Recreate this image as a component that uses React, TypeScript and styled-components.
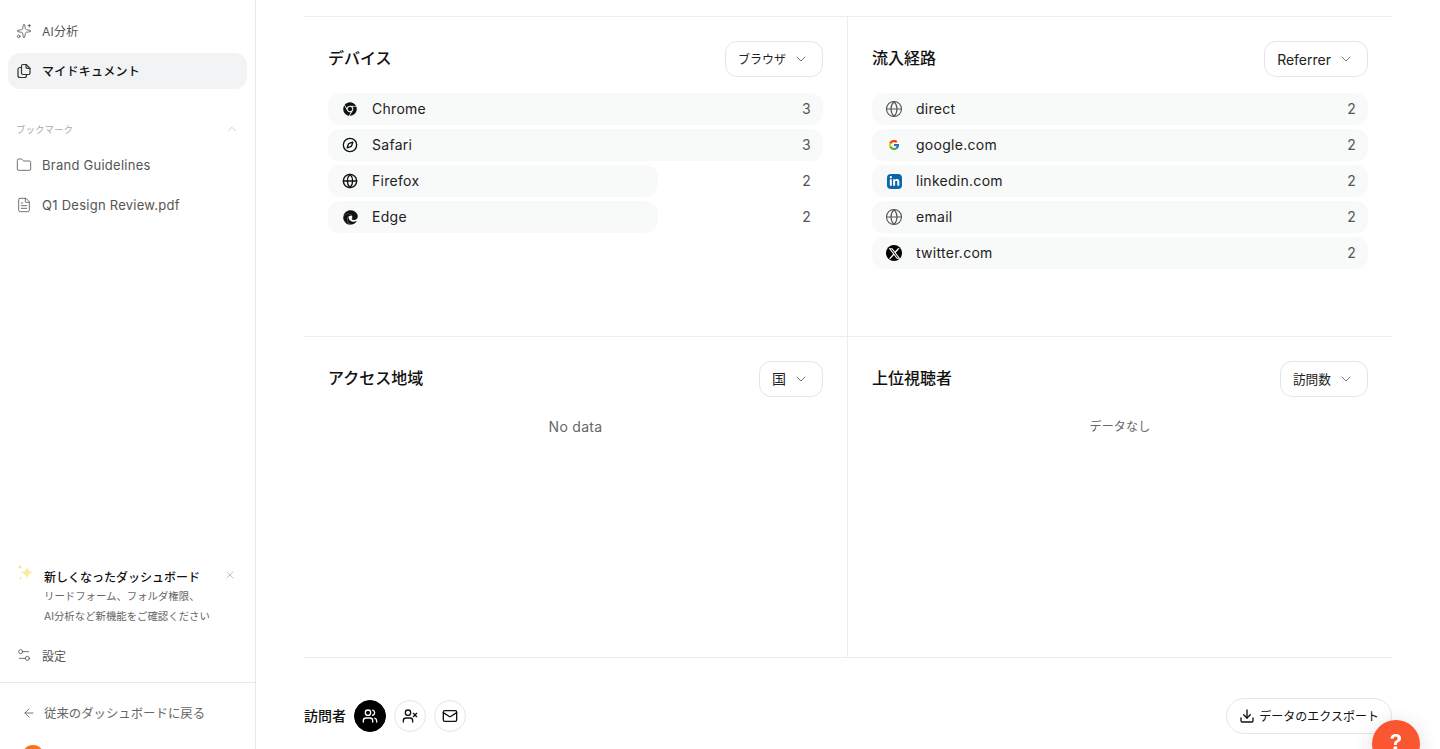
import React from 'react'
import styled, { createGlobalStyle } from 'styled-components'
import {
  ArrowLeft,
  ChevronDown,
  ChevronUp,
  Compass,
  Download,
  FileText,
  Folder,
  Globe,
  Mail,
  Settings2,
  Sparkles,
  UserX,
  Users,
  X,
} from 'lucide-react'
import { FaChrome, FaEdge, FaLinkedinIn } from 'react-icons/fa'
import { FaXTwitter } from 'react-icons/fa6'
import { FcGoogle } from 'react-icons/fc'

const GlobalStyle = createGlobalStyle`
  html, body {
    margin: 0;
    height: 100%;
    overflow: hidden;
    background: #fff;
  }
  body {
    font-family: Inter, "Noto Sans CJK JP", sans-serif;
    color: #111;
  }
  * { box-sizing: border-box; }
`

const Page = styled.div`
  display: flex;
  width: 1440px;
  height: 749px;
  overflow: hidden;
`

const Sidebar = styled.aside`
  flex: 0 0 256px;
  height: 749px;
  display: flex;
  flex-direction: column;
  border-right: 1px solid #e8e8e8;
  padding-top: 13px;
  overflow: hidden;
`

const NavItem = styled.div<{ $active?: boolean }>`
  display: flex;
  align-items: center;
  gap: 10px;
  height: 36px;
  margin: 0 8px 4px;
  padding: 0 8px;
  border-radius: 12px;
  font-size: 12px;
  letter-spacing: 0.02em;
  font-weight: ${(p) => (p.$active ? 500 : 400)};
  color: ${(p) => (p.$active ? '#111' : '#555')};
  background: ${(p) => (p.$active ? '#f2f3f5' : 'transparent')};
  svg { flex: none; color: ${(p) => (p.$active ? '#333' : '#555')}; }
  span { padding-bottom: 2px; }
`

const BookmarkHead = styled.div`
  display: flex;
  align-items: center;
  justify-content: space-between;
  margin: 25px 16px 5px;
  height: 22px;
  font-size: 9.5px;
  color: #aaa;
  svg { color: #bbb; }
`

const BookmarkItem = styled.div`
  display: flex;
  align-items: center;
  gap: 10px;
  height: 40px;
  padding: 0 16px;
  font-size: 13px;
  letter-spacing: 0.02em;
  color: #555;
  svg { flex: none; }
`

const Spacer = styled.div`
  flex: 1;
`

const Promo = styled.div`
  position: relative;
  padding: 0 16px 0 44px;
  margin-bottom: 9px;
`

const PromoStar = styled.svg`
  position: absolute;
  left: 16px;
  top: -4px;
`

const PromoClose = styled.span`
  position: absolute;
  right: 19px;
  top: 2px;
  color: #999;
  display: flex;
`

const PromoTitle = styled.div`
  padding-top: 2px;
  font-size: 12px;
  font-weight: 500;
  line-height: 18px;
  color: #111;
`

const PromoText = styled.div`
  font-size: 10.4px;
  line-height: 20px;
  color: #666;
`

const SettingsRow = styled.div`
  display: flex;
  align-items: center;
  gap: 10px;
  height: 38px;
  padding: 0 16px;
  font-size: 12px;
  color: #555;
`

const SidebarFoot = styled.div`
  border-top: 1px solid #e8e8e8;
  margin-top: 8px;
  padding: 12px 22px 0;
  height: 67px;
`

const BackLink = styled.div`
  display: flex;
  align-items: center;
  gap: 8px;
  height: 36px;
  font-size: 12.4px;
  color: #666;
`

const Avatar = styled.div`
  width: 22px;
  height: 22px;
  margin-top: 14px;
  border-radius: 50%;
  background: #f97316;
`

const Main = styled.main`
  flex: 1;
  padding: 16px 48px 0;
  min-width: 0;
`

const Grid = styled.div`
  display: grid;
  grid-template-columns: 544px 544px;
  grid-template-rows: 320px 321px;
  border-top: 1px solid #ececec;
`

const Cell = styled.section<{ $divider?: boolean }>`
  padding: 24px 24px 0;
  border-bottom: 1px solid #ececec;
  border-right: ${(p) => (p.$divider ? '1px solid #ececec' : 'none')};
`

const CellHead = styled.div`
  display: flex;
  align-items: center;
  justify-content: space-between;
  height: 36px;
  margin-bottom: 16px;
`

const CellTitle = styled.h2`
  margin: 0;
  padding-bottom: 4px;
  font-size: 16px;
  font-weight: 500;
  color: #111;
`

const Select = styled.button<{ $size: number }>`
  display: flex;
  align-items: center;
  gap: 7px;
  height: 36px;
  padding: 0 13px 0 12px;
  border: 1px solid #e5e5e5;
  border-radius: 12px;
  background: #fff;
  font: inherit;
  font-size: ${(p) => p.$size}px;
  color: #222;
  svg { color: #777; }
`

const SelectLabel = styled.span<{ $lift?: boolean }>`
  padding-bottom: ${(p) => (p.$lift ? '2px' : '0')};
`

const List = styled.div`
  display: flex;
  flex-direction: column;
  gap: 4px;
`

const Row = styled.div`
  position: relative;
  height: 32px;
  display: flex;
  align-items: center;
  padding: 0 12px 2px;
  font-size: 14px;
  letter-spacing: 0.02em;
  color: #222;
`

const RowBar = styled.div`
  position: absolute;
  left: 0;
  top: 0;
  bottom: 0;
  background: #f8f9f9;
  border-radius: 12px;
`

const RowIcon = styled.span<{ $muted?: boolean }>`
  position: relative;
  top: 1px;
  width: 20px;
  height: 20px;
  margin-right: 12px;
  display: flex;
  align-items: center;
  justify-content: center;
  color: ${(p) => (p.$muted ? '#555' : '#111')};
`

const RowLabel = styled.span`
  position: relative;
  flex: 1;
`

const RowCount = styled.span`
  position: relative;
  color: #555;
`

const LinkedinBadge = styled.span`
  width: 15px;
  height: 15px;
  border-radius: 4px;
  background: #0a66a8;
  color: #fff;
  display: flex;
  align-items: center;
  justify-content: center;
`

const XBadge = styled.span`
  width: 16px;
  height: 16px;
  border-radius: 50%;
  background: #000;
  color: #fff;
  display: flex;
  align-items: center;
  justify-content: center;
`

const Empty = styled.div<{ $small?: boolean }>`
  text-align: center;
  padding-top: 3px;
  font-size: ${(p) => (p.$small ? '12px' : '14px')};
  letter-spacing: 0.02em;
  line-height: 22px;
  color: #666;
`

const VisitorBar = styled.div`
  display: flex;
  align-items: center;
  justify-content: space-between;
  margin-top: 40px;
`

const VisitorLeft = styled.div`
  display: flex;
  align-items: center;
  gap: 8px;
`

const VisitorTitle = styled.h3`
  margin: 0;
  padding-bottom: 3px;
  font-size: 14px;
  font-weight: 500;
  color: #111;
`

const RoundButton = styled.button<{ $active?: boolean }>`
  width: 32px;
  height: 32px;
  padding: 0;
  display: flex;
  align-items: center;
  justify-content: center;
  border-radius: 50%;
  border: 1px solid ${(p) => (p.$active ? '#000' : '#e5e5e5')};
  background: ${(p) => (p.$active ? '#000' : '#fff')};
  color: ${(p) => (p.$active ? '#fff' : '#111')};
`

const ExportButton = styled.button`
  display: flex;
  align-items: center;
  gap: 4px;
  height: 36px;
  padding: 0 12px;
  border: 1px solid #e5e5e5;
  border-radius: 18px;
  background: #fff;
  font: inherit;
  font-size: 12px;
  color: #111;
  span { padding-bottom: 2px; }
`

const HelpButton = styled.div`
  position: fixed;
  left: 1372px;
  top: 720px;
  width: 48px;
  height: 48px;
  padding-bottom: 4px;
  border-radius: 50%;
  background: #fa5630;
  box-shadow: 0 4px 20px rgba(0, 0, 0, 0.15);
  color: #fff;
  font-size: 22px;
  font-weight: 700;
  display: flex;
  align-items: center;
  justify-content: center;
`

// page with a rounded sheet behind it, used for the active nav item
const DocsIcon = () => (
  <svg width="16" height="16" viewBox="0 0 16 16" fill="none" stroke="currentColor" strokeWidth="1.2" strokeLinecap="round" strokeLinejoin="round">
    <path d="M5.500 4.500H4A2 2 0 0 0 2 6.500v6A2 2 0 0 0 4 14.500h4.500a2 2 0 0 0 2-2v-.5" />
    <path d="M5.500 3a1.500 1.500 0 0 1 1.500-1.500h3.200L14 5.300V10a1.500 1.500 0 0 1-1.500 1.500H7A1.500 1.500 0 0 1 5.500 10z" />
    <path d="M10 1.700V4a1.300 1.300 0 0 0 1.300 1.300H14" />
  </svg>
)

const StarGlyph = () => (
  <PromoStar width="20" height="20" viewBox="0 0 20 20" fill="#fbeaa0">
    <path d="M11 3c.6 4 2 5.600 6.500 6.500C13 10.400 11.600 12 11 16.500 10.400 12 9 10.400 4.500 9.500 9 8.600 10.400 7 11 3z" />
    <path d="M4 1.500c.3 1.700.8 2.200 2.500 2.500C4.800 4.300 4.300 4.800 4 6.500 3.700 4.800 3.200 4.300 1.500 4 3.200 3.700 3.700 3.200 4 1.500z" fill="#f8e08e" />
    <path d="M4.500 13.500c.2 1.200.6 1.600 1.800 1.800-1.200.2-1.600.6-1.800 1.800-.2-1.200-.6-1.600-1.800-1.800 1.200-.2 1.600-.6 1.800-1.800z" fill="#f8e08e" />
  </PromoStar>
)

type Item = {
  label: string
  count: number
  icon: React.ReactNode
  muted?: boolean
}

const devices: Item[] = [
  { label: 'Chrome', count: 3, icon: <FaChrome size={14} /> },
  { label: 'Safari', count: 3, icon: <Compass size={16} strokeWidth={2} /> },
  { label: 'Firefox', count: 2, icon: <Globe size={16} strokeWidth={2} /> },
  { label: 'Edge', count: 2, icon: <FaEdge size={15} /> },
]

const referrers: Item[] = [
  { label: 'direct', count: 2, icon: <Globe size={18} strokeWidth={1.5} />, muted: true },
  { label: 'google.com', count: 2, icon: <FcGoogle size={12} /> },
  {
    label: 'linkedin.com',
    count: 2,
    icon: (
      <LinkedinBadge>
        <FaLinkedinIn size={11} />
      </LinkedinBadge>
    ),
  },
  { label: 'email', count: 2, icon: <Globe size={18} strokeWidth={1.5} />, muted: true },
  {
    label: 'twitter.com',
    count: 2,
    icon: (
      <XBadge>
        <FaXTwitter size={13} />
      </XBadge>
    ),
  },
]

const Bars = ({ items }: { items: Item[] }) => {
  const max = Math.max(...items.map((i) => i.count))
  return (
    <List>
      {items.map((item) => (
        <Row key={item.label}>
          <RowBar style={{ width: `${(item.count / max) * 100}%` }} />
          <RowIcon $muted={item.muted}>{item.icon}</RowIcon>
          <RowLabel>{item.label}</RowLabel>
          <RowCount>{item.count}</RowCount>
        </Row>
      ))}
    </List>
  )
}

const Picker = ({ label, size, lift }: { label: string; size: number; lift?: boolean }) => (
  <Select $size={size}>
    <SelectLabel $lift={lift}>{label}</SelectLabel>
    <ChevronDown size={16} strokeWidth={1.5} />
  </Select>
)

export default function App() {
  return (
    <Page>
      <GlobalStyle />
      <Sidebar>
        <NavItem>
          <Sparkles size={16} strokeWidth={1.25} />
          <span>AI分析</span>
        </NavItem>
        <NavItem $active>
          <DocsIcon />
          <span>マイドキュメント</span>
        </NavItem>
        <BookmarkHead>
          ブックマーク
          <ChevronUp size={14} strokeWidth={1.25} />
        </BookmarkHead>
        <BookmarkItem>
          <Folder size={16} strokeWidth={1.25} />
          Brand Guidelines
        </BookmarkItem>
        <BookmarkItem>
          <FileText size={16} strokeWidth={1.25} />
          Q1 Design Review.pdf
        </BookmarkItem>
        <Spacer />
        <Promo>
          <StarGlyph />
          <PromoClose>
            <X size={12} strokeWidth={1.25} />
          </PromoClose>
          <PromoTitle>新しくなったダッシュボード</PromoTitle>
          <PromoText>リードフォーム、フォルダ権限、</PromoText>
          <PromoText>AI分析など新機能をご確認ください</PromoText>
        </Promo>
        <SettingsRow>
          <Settings2 size={16} strokeWidth={1.25} />
          設定
        </SettingsRow>
        <SidebarFoot>
          <BackLink>
            <ArrowLeft size={14} strokeWidth={1.5} />
            従来のダッシュボードに戻る
          </BackLink>
          <Avatar />
        </SidebarFoot>
      </Sidebar>
      <Main>
        <Grid>
          <Cell $divider>
            <CellHead>
              <CellTitle>デバイス</CellTitle>
              <Picker label="ブラウザ" size={12} lift />
            </CellHead>
            <Bars items={devices} />
          </Cell>
          <Cell>
            <CellHead>
              <CellTitle>流入経路</CellTitle>
              <Picker label="Referrer" size={14} />
            </CellHead>
            <Bars items={referrers} />
          </Cell>
          <Cell $divider>
            <CellHead>
              <CellTitle>アクセス地域</CellTitle>
              <Picker label="国" size={14} lift />
            </CellHead>
            <Empty>No data</Empty>
          </Cell>
          <Cell>
            <CellHead>
              <CellTitle>上位視聴者</CellTitle>
              <Picker label="訪問数" size={12.7} lift />
            </CellHead>
            <Empty $small>データなし</Empty>
          </Cell>
        </Grid>
        <VisitorBar>
          <VisitorLeft>
            <VisitorTitle>訪問者</VisitorTitle>
            <RoundButton $active>
              <Users size={16} />
            </RoundButton>
            <RoundButton>
              <UserX size={16} />
            </RoundButton>
            <RoundButton>
              <Mail size={16} />
            </RoundButton>
          </VisitorLeft>
          <ExportButton>
            <Download size={16} />
            <span>データのエクスポート</span>
          </ExportButton>
        </VisitorBar>
      </Main>
      <HelpButton>?</HelpButton>
    </Page>
  )
}
